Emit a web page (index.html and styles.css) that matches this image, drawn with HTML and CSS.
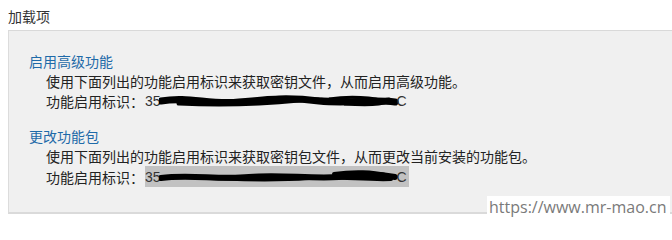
FILE: index.html
```html
<!DOCTYPE html>
<html lang="zh-CN">
<head>
<meta charset="utf-8">
<link rel="stylesheet" href="styles.css">
</head>
<body>
<div class="title">加载项</div>
<div class="panel">
  <section class="group">
    <div class="group-head">启用高级功能</div>
    <div class="line">使用下面列出的功能启用标识来获取密钥文件，从而启用高级功能。</div>
    <div class="line">功能启用标识：<span class="idv"><span class="ch">35</span><svg class="blot" width="240" height="16" viewBox="0 0 240 16"><path d="M2 8 C30 3 50 12 80 9 C110 6 130 4 160 8 C190 11 210 6 236 9" stroke="#000" stroke-width="7" fill="none" stroke-linecap="round"/><path d="M20 10 C60 12 100 11 140 7 C170 5 200 12 230 7" stroke="#000" stroke-width="5" fill="none" stroke-linecap="round"/><path d="M170 6 C190 3 215 4 228 9 C220 13 200 12 185 11" stroke="#000" stroke-width="3" fill="none"/></svg><span class="ch">C</span></span></div>
  </section>
  <section class="group">
    <div class="group-head">更改功能包</div>
    <div class="line">使用下面列出的功能启用标识来获取密钥包文件，从而更改当前安装的功能包。</div>
    <div class="line">功能启用标识：<span class="idv sel"><span class="ch">35</span><svg class="blot" width="240" height="16" viewBox="0 0 240 16"><path d="M2 9 C30 5 60 11 90 8 C120 5 150 10 180 8 C200 6 215 4 236 8" stroke="#000" stroke-width="6" fill="none" stroke-linecap="round"/><path d="M15 7 C60 10 110 12 150 9 C180 7 205 11 232 10" stroke="#000" stroke-width="4" fill="none" stroke-linecap="round"/><path d="M175 5 C195 2 215 3 226 6" stroke="#000" stroke-width="4" fill="none" stroke-linecap="round"/></svg><span class="ch">C</span></span></div>
  </section>
</div>
<div class="watermark">https://www.mr-mao.cn</div>
</body>
</html>
```
FILE: styles.css
```css
html, body {
  margin: 0;
  padding: 0;
  background: #ffffff;
}
body {
  font-family: "Noto Sans CJK SC", "Noto Sans", sans-serif;
  font-size: 14px;
  line-height: 20px;
  color: #333333;
  position: relative;
  width: 672px;
  height: 226px;
  overflow: hidden;
}
.title {
  padding: 6px 0 0 8px;
  height: 24px;
  color: #333333;
}
.panel {
  margin-left: 8px;
  background: #f0f0f0;
  border-top: 1px solid #d9d9d9;
  border-left: 1px solid #dcdcdc;
  border-bottom: 2px solid #dadada;
  padding: 20px 0 26px 20px;
  display: flex;
  flex-direction: column;
  gap: 15px;
  height: 135px;
}
.group-head {
  color: #1e6aa8;
}
.line {
  padding-left: 17px;
  color: #222222;
  display: flex;
  align-items: center;
  white-space: nowrap;
}
.idv {
  display: inline-flex;
  align-items: center;
  height: 20px;
  font-family: "Liberation Sans", Arial, sans-serif;
  font-size: 14px;
  color: #333;
  margin-left: 1px;
  padding-right: 2px;
}
.idv.sel {
  background: #c2c2c2;
  height: 21px;
}
.blot {
  display: block;
  margin-left: -2px;
  margin-right: -2px;
}
.watermark {
  position: absolute;
  left: 487px;
  top: 196px;
  padding: 0 4px 0 2px;
  background: #ffffff;
  font-family: "Open Sans", "Noto Sans", sans-serif;
  font-size: 16px;
  line-height: 22px;
  color: #7a7a7a;
}
```
